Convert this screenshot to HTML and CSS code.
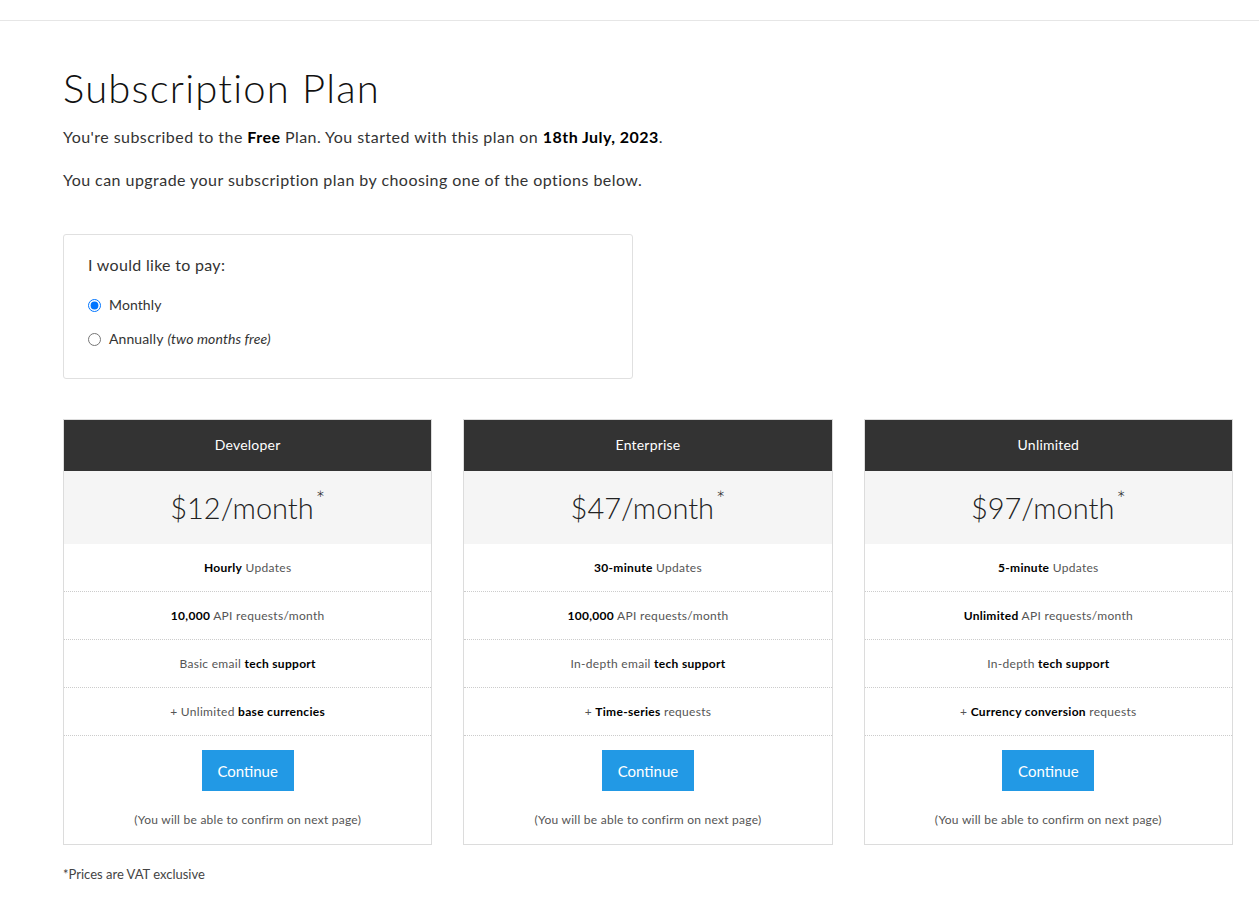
FILE: index.html
```html
<!DOCTYPE html>
<html lang="en">
<head>
    <meta charset="UTF-8">
    <meta name="viewport" content="width=device-width, initial-scale=1.0">
    <title>Subscription Plan</title>
    <link rel="stylesheet" href="styles.css">
</head>
<body>

    <!-- Top bar -->
    <div class="topbar"></div>

    <div class="page">
        <h1>Subscription Plan</h1>
        <p class="intro">You're subscribed to the <strong>Free</strong> Plan. You started with this plan on <strong>18th July, 2023</strong>.</p>
        <p class="intro">You can upgrade your subscription plan by choosing one of the options below.</p>

        <!-- Billing period -->
        <div class="pay-box">
            <p class="pay-title">I would like to pay:</p>
            <label class="pay-option"><input type="radio" name="period" checked> Monthly</label>
            <label class="pay-option"><input type="radio" name="period"> Annually <em>(two months free)</em></label>
        </div>

        <!-- Plans -->
        <div class="plans">
            <div class="plan">
                <div class="plan-name">Developer</div>
                <div class="plan-price">$12/month<sup>*</sup></div>
                <div class="plan-row"><strong>Hourly</strong> Updates</div>
                <div class="plan-row"><strong>10,000</strong> API requests/month</div>
                <div class="plan-row">Basic email <strong>tech support</strong></div>
                <div class="plan-row">+ Unlimited <strong>base currencies</strong></div>
                <div class="plan-foot">
                    <button class="btn">Continue</button>
                    <p class="note">(You will be able to confirm on next page)</p>
                </div>
            </div>
            <div class="plan">
                <div class="plan-name">Enterprise</div>
                <div class="plan-price">$47/month<sup>*</sup></div>
                <div class="plan-row"><strong>30-minute</strong> Updates</div>
                <div class="plan-row"><strong>100,000</strong> API requests/month</div>
                <div class="plan-row">In-depth email <strong>tech support</strong></div>
                <div class="plan-row">+ <strong>Time-series</strong> requests</div>
                <div class="plan-foot">
                    <button class="btn">Continue</button>
                    <p class="note">(You will be able to confirm on next page)</p>
                </div>
            </div>
            <div class="plan">
                <div class="plan-name">Unlimited</div>
                <div class="plan-price">$97/month<sup>*</sup></div>
                <div class="plan-row"><strong>5-minute</strong> Updates</div>
                <div class="plan-row"><strong>Unlimited</strong> API requests/month</div>
                <div class="plan-row">In-depth <strong>tech support</strong></div>
                <div class="plan-row">+ <strong>Currency conversion</strong> requests</div>
                <div class="plan-foot">
                    <button class="btn">Continue</button>
                    <p class="note">(You will be able to confirm on next page)</p>
                </div>
            </div>
        </div>

        <p class="vat">*Prices are VAT exclusive</p>
    </div>

</body>
</html>
```

FILE: styles.css
```css
/* Basic reset */
* {
    margin: 0;
    padding: 0;
    box-sizing: border-box;
}

body {
    font-family: Lato, "Open Sans", sans-serif;
    color: #333;
    background: #fff;
}

/* Thin line at the top */
.topbar {
    height: 21px;
    border-bottom: 1px solid #e6e6e6;
}

.page {
    padding: 43px 26px 0 63px;
}

h1 {
    font-size: 40px;
    font-weight: 300;
    letter-spacing: 1.2px;
    color: #111;
    line-height: 48px;
    margin-bottom: 14px;
}

.intro {
    font-size: 16px;
    letter-spacing: 0.45px;
    line-height: 22px;
    margin-bottom: 21px;
}

.intro strong {
    color: #000;
}

/* Monthly / annual box */
.pay-box {
    width: 570px;
    border: 1px solid #e0e0e0;
    border-radius: 3px;
    padding: 19px 24px 22px;
    margin-top: 43px;
}

.pay-title {
    font-size: 16px;
    letter-spacing: 0.3px;
    line-height: 22px;
    margin-bottom: 12px;
}

.pay-option {
    display: flex;
    align-items: center;
    font-size: 14px;
    letter-spacing: 0.1px;
    line-height: 34px;
}

.pay-option input {
    width: 13px;
    height: 13px;
    margin: 0 8px 0 0;
}

.pay-option em {
    margin-left: 4px;
}

/* Plan cards */
.plans {
    display: flex;
    gap: 31px;
    margin-top: 40px;
}

.plan {
    width: 370px;
    border: 1px solid #dcdcdc;
    text-align: center;
}

.plan-name {
    background: #333;
    color: #fff;
    font-size: 14px;
    letter-spacing: 0.2px;
    height: 51px;
    line-height: 50px;
}

.plan-price {
    background: #f5f5f5;
    font-size: 29px;
    font-weight: 300;
    color: #222;
    height: 73px;
    line-height: 73px;
}

.plan-price sup {
    font-size: 22px;
    line-height: 0;
    margin-left: 2px;
    position: relative;
    top: -1px;
}

.plan-row {
    font-size: 12px;
    letter-spacing: 0.3px;
    color: #555;
    height: 48px;
    line-height: 47px;
    border-bottom: 1px dotted #ccc;
}

.plan-row strong {
    color: #000;
}

.plan-foot {
    padding: 14px 0 17px;
}

.btn {
    background: #2299e5;
    color: #fff;
    border: none;
    font-family: inherit;
    font-size: 15px;
    width: 92px;
    height: 41px;
    cursor: pointer;
}

.note {
    font-size: 12px;
    letter-spacing: 0.25px;
    color: #555;
    margin-top: 21px;
}

.vat {
    font-size: 13px;
    color: #444;
    margin-top: 21px;
}
```
